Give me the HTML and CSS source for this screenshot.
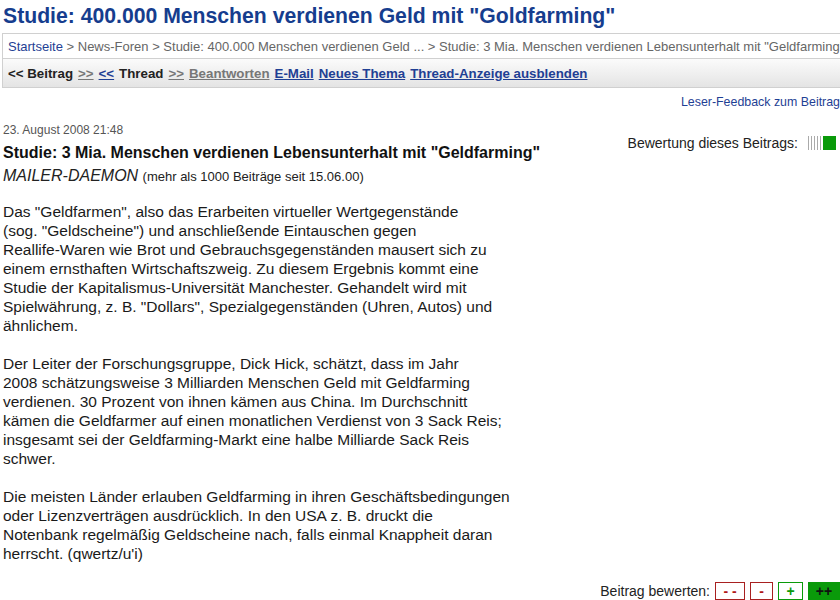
FILE: index.html
```html
<!DOCTYPE html>
<html lang="de">
<head>
    <meta charset="UTF-8">
    <meta name="viewport" content="width=device-width, initial-scale=1.0">
    <title>Studie: 3 Mia. Menschen verdienen Lebensunterhalt mit "Geldfarming"</title>
    <link rel="stylesheet" href="styles.css">
</head>
<body>
    <div class="page">
        <h1 class="forum-title">Studie: 400.000 Menschen verdienen Geld mit "Goldfarming"</h1>

        <!-- Breadcrumb + thread navigation -->
        <div class="navbox">
            <div class="crumbs">
                <a href="#" class="blue">Startseite</a> &gt; News-Foren &gt; Studie: 400.000 Menschen verdienen Geld ... &gt; Studie: 3 Mia. Menschen verdienen Lebensunterhalt mit "Geldfarming"
            </div>
            <div class="threadnav">
                <span>&lt;&lt; Beitrag</span>
                <a href="#" class="grey">&gt;&gt;</a>
                <a href="#" class="blue">&lt;&lt;</a>
                <span>Thread</span>
                <a href="#" class="grey">&gt;&gt;</a>
                <a href="#" class="grey">Beantworten</a>
                <a href="#" class="blue">E-Mail</a>
                <a href="#" class="blue">Neues Thema</a>
                <a href="#" class="blue">Thread-Anzeige ausblenden</a>
            </div>
        </div>

        <div class="feedback"><a href="#">Leser-Feedback zum Beitrag</a></div>

        <!-- Post -->
        <div class="post">
            <div class="post-head">
                <div class="post-meta">
                    <div class="date">23. August 2008 21:48</div>
                    <h2 class="post-title">Studie: 3 Mia. Menschen verdienen Lebensunterhalt mit "Geldfarming"</h2>
                    <div class="author"><em>MAILER-DAEMON</em> <span>(mehr als 1000 Beiträge seit 15.06.00)</span></div>
                </div>
                <div class="rating">
                    Bewertung dieses Beitrags:
                    <span class="meter"><span class="ticks"></span><span class="fill"></span></span>
                </div>
            </div>

            <div class="post-body">
                <p>Das "Geldfarmen", also das Erarbeiten virtueller Wertgegenstände<br>
                (sog. "Geldscheine") und anschließende Eintauschen gegen<br>
                Reallife-Waren wie Brot und Gebrauchsgegenständen mausert sich zu<br>
                einem ernsthaften Wirtschaftszweig. Zu diesem Ergebnis kommt eine<br>
                Studie der Kapitalismus-Universität Manchester. Gehandelt wird mit<br>
                Spielwährung, z. B. "Dollars", Spezialgegenständen (Uhren, Autos) und<br>
                ähnlichem.</p>

                <p>Der Leiter der Forschungsgruppe, Dick Hick, schätzt, dass im Jahr<br>
                2008 schätzungsweise 3 Milliarden Menschen Geld mit Geldfarming<br>
                verdienen. 30 Prozent von ihnen kämen aus China. Im Durchschnitt<br>
                kämen die Geldfarmer auf einen monatlichen Verdienst von 3 Sack Reis;<br>
                insgesamt sei der Geldfarming-Markt eine halbe Milliarde Sack Reis<br>
                schwer.</p>

                <p>Die meisten Länder erlauben Geldfarming in ihren Geschäftsbedingungen<br>
                oder Lizenzverträgen ausdrücklich. In den USA z. B. druckt die<br>
                Notenbank regelmäßig Geldscheine nach, falls einmal Knappheit daran<br>
                herrscht. (qwertz/u'i)</p>
            </div>

            <div class="vote">
                Beitrag bewerten:
                <a href="#" class="vbtn neg w2">- -</a>
                <a href="#" class="vbtn neg w1">-</a>
                <a href="#" class="vbtn pos w1p">+</a>
                <a href="#" class="vbtn top w2p">++</a>
            </div>
        </div>
    </div>
</body>
</html>
```

FILE: styles.css
```css
body {
    margin: 0;
    font-family: "Liberation Sans", Arial, sans-serif;
    color: #111;
    background: #fff;
    overflow-x: hidden;
}
a {
    text-decoration: underline;
}
.page {
    padding: 0 0 0 2px;
}
.forum-title {
    margin: 0;
    padding: 3px 0 0 1px;
    height: 30px;
    font-size: 21.2px;
    line-height: 26px;
    color: #163d8e;
}
.navbox {
    border-top: 1px solid #d0d0d0;
    border-left: 1px solid #d0d0d0;
}
.crumbs {
    padding: 0 0 0 5px;
    height: 24px;
    line-height: 25px;
    font-size: 13px;
    color: #666;
    white-space: nowrap;
    overflow: hidden;
    border-bottom: 1px solid #d0d0d0;
}
.crumbs a {
    text-decoration: none;
}
.blue {
    color: #1f3f94;
}
.grey {
    color: #777;
}
.threadnav {
    display: flex;
    gap: 5px;
    padding: 0 0 0 5px;
    height: 28px;
    line-height: 29px;
    font-size: 13.3px;
    font-weight: bold;
    color: #222;
    white-space: nowrap;
    background: linear-gradient(#fbfbfb, #e4e4e4);
    border-bottom: 1px solid #d0d0d0;
}
.feedback {
    text-align: right;
    font-size: 12.4px;
    line-height: 14px;
    padding-top: 7px;
}
.feedback a {
    color: #1f3f94;
    text-decoration: none;
}
.post {
    padding: 0 0 0 1px;
}
.post-head {
    display: flex;
    justify-content: space-between;
    align-items: flex-start;
}
.date {
    font-size: 12px;
    color: #555;
    margin-top: 14px;
    line-height: 14px;
}
.post-title {
    margin: 7px 0 0;
    font-size: 16px;
    line-height: 18px;
    color: #111;
}
.author {
    margin-top: 4px;
    line-height: 20px;
}
.author em {
    font-size: 16px;
    color: #222;
}
.author span {
    font-size: 13px;
    color: #222;
}
.rating {
    display: flex;
    align-items: center;
    gap: 10px;
    margin-top: 26px;
    font-size: 14px;
    line-height: 16px;
    color: #222;
}
.meter {
    display: flex;
    margin-right: 4px;
}
.ticks {
    width: 15px;
    height: 14px;
    background: repeating-linear-gradient(90deg, #aaa 0 1px, #fff 1px 3px);
}
.fill {
    width: 13px;
    height: 14px;
    background: #0a9a0a;
}
.post-body {
    font-size: 15.5px;
    line-height: 19px;
    color: #1a1a1a;
    margin-top: 15px;
}
.post-body p {
    margin: 0 0 19px;
}
.vote {
    display: flex;
    justify-content: flex-end;
    align-items: center;
    gap: 5px;
    font-size: 14px;
    line-height: 18px;
    color: #222;
}
.vbtn {
    display: inline-block;
    height: 16px;
    line-height: 16px;
    font-size: 14px;
    font-weight: bold;
    text-decoration: none;
    text-align: center;
}
.w2 { width: 28px; }
.w1 { width: 21px; }
.w1p { width: 23px; }
.w2p { width: 30px; }
.neg {
    color: #b01818;
    border: 1px solid #a82020;
}
.pos {
    color: #0a9a0a;
    border: 1px solid #0a9a0a;
}
.top {
    color: #111;
    background: #0a9a0a;
    border: 1px solid #0a9a0a;
}
```
